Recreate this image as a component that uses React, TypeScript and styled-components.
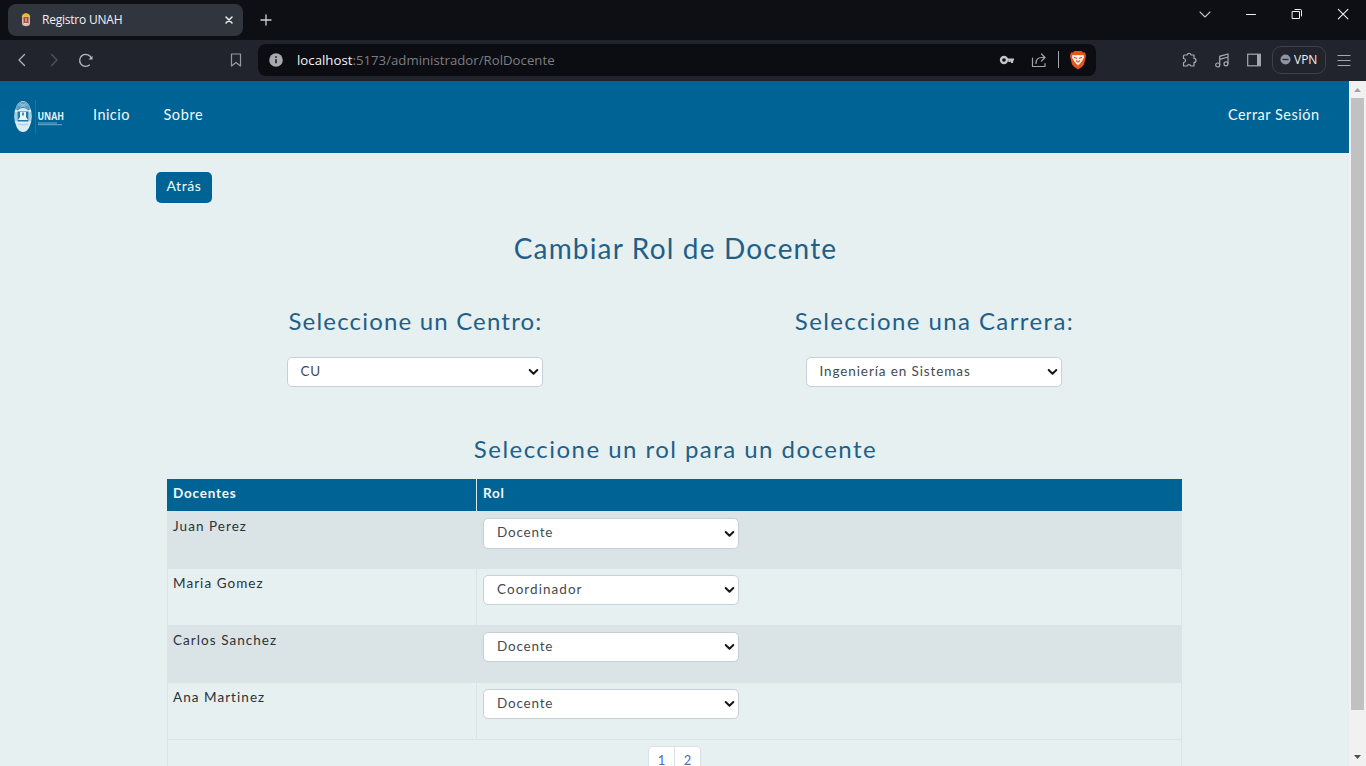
import React from "react";
import styled, { createGlobalStyle } from "styled-components";

const rounded = `Lato, "Open Sans", sans-serif`;
const system = `"Open Sans", "Noto Sans", sans-serif`;

const GlobalStyle = createGlobalStyle`
  *, *::before, *::after { box-sizing: border-box; }
  html, body { margin: 0; height: 100%; overflow: hidden; background: #e6f0f1; }
`;

const Window = styled.div`
  display: flex;
  flex-direction: column;
  width: 1366px;
  height: 766px;
  overflow: hidden;
  font-family: ${rounded};
`;

const TabBar = styled.div`
  display: flex;
  align-items: center;
  flex: none;
  height: 40px;
  padding: 0 0 0 8px;
  background: #0e0f14;
`;

const Tab = styled.div`
  display: flex;
  align-items: center;
  width: 235px;
  height: 32px;
  padding: 0 9px 0 11px;
  border-radius: 8px;
  background: #31353e;
  color: #f1f2f4;
  font: 12px ${system};
`;

const TabTitle = styled.span`
  flex: 1;
  margin-left: 9px;
  padding-bottom: 1px;
  letter-spacing: -0.22px;
`;

const NewTab = styled.div`
  display: flex;
  margin-left: 16px;
`;

const WindowButtons = styled.div`
  display: flex;
  gap: 30px;
  margin: -12px 15px 0 auto;
`;

const Toolbar = styled.div`
  display: flex;
  align-items: center;
  flex: none;
  height: 41px;
  padding: 0 14px 2px;
  background: #21242c;
`;

const NavButtons = styled.div`
  display: flex;
  align-items: center;
  gap: 16px;
  width: 214px;
`;

const AddressBar = styled.div`
  display: flex;
  align-items: center;
  width: 838px;
  height: 32px;
  margin-left: 14px;
  padding: 0 9px 0 10px;
  border-radius: 8px;
  background: #0c0d12;
  font: 13.2px ${system};
`;

const Url = styled.div`
  flex: 1;
  margin-left: 13px;
  color: #7c7e83;
  letter-spacing: 0.02px;
  b { color: #f3f3f4; font-weight: 400; }
`;

const AddressActions = styled.div`
  display: flex;
  align-items: center;
  gap: 10px;
`;

const ShareButton = styled.div`
  display: flex;
  margin-left: 6px;
`;

const Separator = styled.i`
  width: 1px;
  height: 17px;
  margin: 0 0 0 1px;
  background: #a5a7ac;
`;

const Extensions = styled.div`
  display: flex;
  align-items: center;
  gap: 10px;
  margin-left: auto;
`;

const ExtensionIcons = styled.div`
  display: flex;
  align-items: center;
  gap: 16px;
`;

const Vpn = styled.div`
  display: flex;
  align-items: center;
  gap: 3px;
  width: 54px;
  height: 28px;
  padding-left: 7px;
  border: 1px solid #3c4049;
  border-radius: 9px;
  color: #eff0f3;
  font: 500 12px ${system};
`;

const Viewport = styled.div`
  display: flex;
  flex: 1;
  min-height: 0;
`;

const Page = styled.div`
  flex: 1;
  overflow: hidden;
  background: #e6f0f1;
`;

const Navbar = styled.nav`
  display: flex;
  align-items: center;
  height: 72px;
  padding: 0 30px 0 12px;
  background: #006395;
`;

const NavLink = styled.a<{ $left?: number; $end?: boolean; $spacing: number }>`
  margin-left: ${(p) => (p.$end ? "auto" : `${p.$left ?? 0}px`)};
  margin-top: -5px;
  margin-right: ${(p) => -p.$spacing}px;
  color: #f1fafc;
  font-size: 14.5px;
  line-height: 20px;
  letter-spacing: ${(p) => p.$spacing}px;
`;

const Main = styled.main`
  padding: 19px 167px 0;
`;

const BackButton = styled.button`
  display: block;
  width: 56px;
  height: 31px;
  margin-left: -11px;
  padding: 0 0 4px;
  border: 0;
  border-radius: 5px;
  background: #006395;
  color: #f1fafc;
  font: 14px ${rounded};
  letter-spacing: 0.6px;
`;

const Heading = styled.h2<{ $size: number; $spacing: number }>`
  margin: 0;
  padding-left: 2px;
  color: #1f5f88;
  font-weight: 400;
  font-size: ${(p) => p.$size}px;
  line-height: 30px;
  letter-spacing: ${(p) => p.$spacing}px;
  text-align: center;
  white-space: nowrap;
`;

const TitleBlock = styled.header`
  height: 33px;
  margin-top: 30px;
`;

const Filters = styled.section`
  display: grid;
  grid-template-columns: 518px 520px;
  justify-content: center;
  margin: 40px 0 47px;
`;

const Filter = styled.div`
  display: flex;
  flex-direction: column;
  align-items: center;
  gap: 21px;
`;

const SelectBox = styled.label<{ $height: number }>`
  display: grid;
  align-items: center;
  width: 256px;
  height: ${(p) => p.$height}px;
  border: 1px solid #c6d0d8;
  border-radius: 5px;
  background: #fff;
  > * { grid-area: 1 / 1; }
  > svg { justify-self: end; margin-right: 3px; pointer-events: none; }
`;

const NativeSelect = styled.select<{ $spacing: number }>`
  appearance: none;
  width: 100%;
  height: 100%;
  padding: 0 24px 3px 13px;
  border: 0;
  background: transparent;
  color: #454a50;
  font: 13.5px ${rounded};
  letter-spacing: ${(p) => p.$spacing}px;
`;

const Table = styled.table`
  width: 1015px;
  margin-top: 15px;
  border-collapse: separate;
  border-spacing: 0;
  table-layout: fixed;
  color: #2b3237;
  font-size: 13.5px;
`;

const HeadCell = styled.th<{ $width?: number }>`
  width: ${(p) => (p.$width ? `${p.$width}px` : "auto")};
  height: 32px;
  padding: 0 6px 4px;
  border-right: ${(p) => (p.$width ? "1px solid #d9e8ee" : "0")};
  background: #006395;
  color: #f3fafc;
  text-align: left;
  line-height: 18px;
  letter-spacing: 0.8px;
`;

const Row = styled.tr<{ $striped: boolean }>`
  background: ${(p) => (p.$striped ? "#dae3e5" : "#e6f0f1")};
`;

const Cell = styled.td`
  height: 57px;
  padding: 6px 6px 0;
  border: 0 solid #dae3e5;
  border-width: 0 1px 1px 0;
  vertical-align: top;
  &:first-child { border-left-width: 1px; padding-left: 5px; }
  tr:first-child > & { height: 58px; padding-top: 7px; }
`;

const Teacher = styled.span`
  display: block;
  line-height: 17px;
  letter-spacing: 1.05px;
`;

const PagerCell = styled(Cell)`
  height: 50px;
`;

const Pager = styled.div`
  display: flex;
  width: 53px;
  height: 31px;
  margin-left: 475px;
  border: 1px solid #d9e1e6;
  border-radius: 4px;
  background: #fff;
`;

const PageLink = styled.a`
  flex: 1;
  color: #4a6fc0;
  font-size: 13px;
  line-height: 26px;
  text-align: center;
  & + & { border-left: 1px solid #d9e1e6; }
`;

const ScrollTrack = styled.div`
  display: flex;
  flex-direction: column;
  align-items: center;
  justify-content: space-between;
  width: 17px;
  padding: 7px 0;
  background: #f1f1f1;
`;

const ScrollThumb = styled.div`
  width: 13px;
  height: 612px;
  margin: 6px 1px auto 0;
  background: #c1c1c1;
`;

type StrokeProps = { w: number; h: number; d: string; color?: string; width?: number };

const Stroke = ({ w, h, d, color = "#a4a8b2", width = 1.2 }: StrokeProps) => (
  <svg width={w} height={h} viewBox={`0 0 ${w} ${h}`} fill="none" stroke={color} strokeWidth={width} strokeLinecap="round" strokeLinejoin="round">
    <path d={d} />
  </svg>
);

const Favicon = () => (
  <svg width="14" height="16" viewBox="0 0 14 16">
    <path d="M3 6 Q2 2 7 1 Q12 2 11 6Z" fill="#e9bd32" />
    <rect x="3" y="4.5" width="8" height="9.5" rx="3" fill="#cfc4bc" />
    <path d="M4.500 5h5v6.500h-5z" fill="#b34436" />
    <path d="M7 6v4M5 11.500h4" stroke="#efd4ba" strokeWidth="1" />
    <path d="M5.500 14h3l-1.500 1z" fill="#a43e36" />
  </svg>
);

const Crest = () => (
  <svg width="56" height="36" viewBox="0 0 56 36">
    <ellipse cx="11" cy="17.500" rx="8.700" ry="15.500" fill="#d9edf6" />
    <path d="M3.500 11Q5 2.500 11 2.500T18.500 11Q11 6 3.500 11Z" fill="#5f9fc2" />
    <path d="M6 6h10M8 4l6 5M14 4L8 9" stroke="#a9cfe2" strokeWidth=".7" />
    <path d="M5 11Q11 6 17 11" fill="none" stroke="#3c86b1" strokeWidth="1.200" />
    <path d="M5.500 12.500h11v10h-11z" fill="#2476a5" />
    <path d="M8 13h6v5l2 3H6l2-3z" fill="#e9f7fc" />
    <path d="M10 13.500h2v3h-2z" fill="#4b91b8" />
    <path d="M4 13v9M18 13v9" stroke="#75adc9" strokeWidth="1" />
    <path d="M6 25Q11 27 16 25" fill="none" stroke="#a6cee2" />
    <path d="M23.500 1v34" stroke="#1c73a1" strokeWidth="1" />
    <text x="25.500" y="21" fill="#e1f2fa" fontFamily="Open Sans" fontWeight="700" fontSize="10" textLength="26.500" lengthAdjust="spacingAndGlyphs">UNAH</text>
    <path d="M26 24h19" stroke="#72abc9" strokeWidth="1" />
    <path d="M26 25.700h24" stroke="#72abc9" strokeWidth="1" />
  </svg>
);

const Brave = () => (
  <svg width="18" height="20" viewBox="0 0 18 20">
    <path d="M5.500 1h7l1.500 1.500h2L17 6l-2 8.500Q13 17.500 9 19.500 5 17.500 3 14.500L1 6l1-3.500h2z" fill="#e4541f" />
    <path d="M3.500 5l3 .3L9 5l2.500.3 3-.3.500 2.500-2 3.500-1.500 2L9 15.500 6.500 13 5 11 3 7.500z" fill="#fff1e9" />
    <path d="M5 7.200l3 1.300M13 7.200l-3 1.300M7 10.500l2 1.500 2-1.500" fill="none" stroke="#e4541f" strokeWidth="1.200" />
  </svg>
);

const KeyIcon = () => (
  <svg width="16" height="12" viewBox="0 0 16 12" fill="none" stroke="#c3c5ca">
    <circle cx="5" cy="6" r="3" strokeWidth="2.400" />
    <path d="M8 5.500h7M13 6v3M10.500 6v2" strokeWidth="2.200" />
  </svg>
);

const MusicIcon = () => (
  <svg width="16" height="16" viewBox="0 0 16 16" fill="none" stroke="#a4a8b2" strokeWidth="1.200">
    <circle cx="3.700" cy="13" r="2" />
    <circle cx="12" cy="11.800" r="2" />
    <path d="M5.700 13V4.300L14 2v9.800M5.700 7.300L14 5" />
  </svg>
);

const SidebarIcon = () => (
  <svg width="16" height="16" viewBox="0 0 16 16">
    <rect x="1.700" y="2.200" width="12.600" height="11.600" fill="none" stroke="#a4a8b2" strokeWidth="1.200" />
    <path d="M11 2.500h3.500v11H11z" fill="#a4a8b2" />
  </svg>
);

const InfoIcon = () => (
  <svg width="16" height="16" viewBox="0 0 16 16">
    <circle cx="8" cy="8" r="6.800" fill="#a7a9ae" />
    <path d="M8 7.300v4M8 4.300v1.500" stroke="#191b20" strokeWidth="1.600" />
  </svg>
);

const Reload = () => (
  <svg width="16" height="16" viewBox="0 0 16 16" fill="none" stroke="#b4b7bf" strokeWidth="1.300">
    <path d="M13.400 6.500A6 6 0 1 0 11.800 12.700" />
    <path d="M10.500 7.500h4V3.800z" fill="#b4b7bf" stroke="none" />
  </svg>
);

const ScrollArrow = ({ down }: { down?: boolean }) => (
  <svg width="7" height="4" viewBox="0 0 7 4">
    <path d={down ? "M0 0h7L3.500 4z" : "M0 4h7L3.500 0z"} fill={down ? "#505050" : "#a3a3a3"} />
  </svg>
);

const Select = ({ value, spacing = 0.8, height = 30 }: { value: string; spacing?: number; height?: number }) => (
  <SelectBox $height={height}>
    <NativeSelect $spacing={spacing} defaultValue={value}>
      <option>{value}</option>
    </NativeSelect>
    <Stroke w={11} h={8} d="M1.700 2l3.800 3.800L9.300 2" color="#16181b" width={2} />
  </SelectBox>
);

const teachers = [
  { name: "Juan Perez", role: "Docente", spacing: 0.8 },
  { name: "Maria Gomez", role: "Coordinador", spacing: 1.05 },
  { name: "Carlos Sanchez", role: "Docente", spacing: 0.8 },
  { name: "Ana Martinez", role: "Docente", spacing: 0.8 },
];

export default function App() {
  return (
    <Window>
      <GlobalStyle />
      <TabBar>
        <Tab>
          <Favicon />
          <TabTitle>Registro UNAH</TabTitle>
          <Stroke w={10} h={10} d="M2 2l6 6M8 2L2 8" color="#eceef0" width={1.5} />
        </Tab>
        <NewTab><Stroke w={14} h={14} d="M7 2v10M2 7h10" color="#cfd0d4" width={1.3} /></NewTab>
        <WindowButtons>
          <Stroke w={16} h={16} d="M3 6l5 5 5-5" color="#c1c2c6" width={1.1} />
          <Stroke w={16} h={16} d="M3.500 8.500h9" color="#f0f0f0" width={1} />
          <Stroke w={16} h={16} d="M3.500 5.500h7v7h-7zM6 3.500h5.500q1 0 1 1V10" color="#f0f0f0" width={1} />
          <Stroke w={16} h={16} d="M3.300 3.300l9.600 9.600M12.900 3.300L3.300 12.900" color="#f0f0f0" width={1.1} />
        </WindowButtons>
      </TabBar>
      <Toolbar>
        <NavButtons>
          <Stroke w={16} h={16} d="M10.500 2.500L5 8l5.500 5.500" color="#b4b7bf" />
          <Stroke w={16} h={16} d="M5.500 2.500L11 8l-5.500 5.500" color="#535760" />
          <Reload />
        </NavButtons>
        <Stroke w={16} h={16} d="M3.500 2h9v12L8 10.500 3.500 14z" color="#969aa4" />
        <AddressBar>
          <InfoIcon />
          <Url><b>localhost</b>:5173/administrador/RolDocente</Url>
          <AddressActions>
            <KeyIcon />
            <ShareButton>
              <Stroke w={16} h={16} d="M1.500 6v8.500h12.500V11.500M5 11.500Q5 5.500 11 5.500h3M10.500 2L14 5.500 10.500 9" color="#a4a6ab" />
            </ShareButton>
            <Separator />
            <Brave />
          </AddressActions>
        </AddressBar>
        <Extensions>
          <ExtensionIcons>
            <Stroke
              w={16}
              h={16}
              d="M2.500 3H5a2.200 2.200 0 0 1 4.200 0H12v3.400a2 2 0 0 1 0 4V14H9a2.200 2.200 0 0 0-4 0H1.500v-3.500a2 2 0 0 0 0-4V4q0-1 1-1z"
            />
            <MusicIcon />
            <SidebarIcon />
          </ExtensionIcons>
          <Vpn>
            <svg width="11" height="11" viewBox="0 0 11 11">
              <circle cx="5.500" cy="5.500" r="5" fill="#8f94a5" />
              <path d="M2.500 5.500h6" stroke="#282b34" strokeWidth="1.300" />
            </svg>
            VPN
          </Vpn>
          <Stroke w={16} h={16} d="M2 3.500h12M2 8.500h12M2 13.500h12" />
        </Extensions>
      </Toolbar>
      <Viewport>
        <Page>
          <Navbar>
            <Crest />
            <NavLink $left={25} $spacing={0.45}>Inicio</NavLink>
            <NavLink $left={34} $spacing={0.6}>Sobre</NavLink>
            <NavLink $end $spacing={0.5}>Cerrar Sesión</NavLink>
          </Navbar>
          <Main>
            <BackButton>Atrás</BackButton>
            <TitleBlock>
              <Heading $size={28} $spacing={1.18}>Cambiar Rol de Docente</Heading>
            </TitleBlock>
            <Filters>
              <Filter>
                <Heading as="h3" $size={24} $spacing={1.18}>Seleccione un Centro:</Heading>
                <Select value="CU" />
              </Filter>
              <Filter>
                <Heading as="h3" $size={24} $spacing={1.4}>Seleccione una Carrera:</Heading>
                <Select value="Ingeniería en Sistemas" spacing={0.89} />
              </Filter>
            </Filters>
            <Heading as="h3" $size={24} $spacing={1.46}>Seleccione un rol para un docente</Heading>
            <Table>
              <thead>
                <tr>
                  <HeadCell $width={310}>Docentes</HeadCell>
                  <HeadCell>Rol</HeadCell>
                </tr>
              </thead>
              <tbody>
                {teachers.map((t, i) => (
                  <Row key={t.name} $striped={i % 2 === 0}>
                    <Cell><Teacher>{t.name}</Teacher></Cell>
                    <Cell><Select value={t.role} spacing={t.spacing} height={i === 0 ? 31 : 30} /></Cell>
                  </Row>
                ))}
                <tr>
                  <PagerCell colSpan={2}>
                    <Pager><PageLink>1</PageLink><PageLink>2</PageLink></Pager>
                  </PagerCell>
                </tr>
              </tbody>
            </Table>
          </Main>
        </Page>
        <ScrollTrack>
          <ScrollArrow />
          <ScrollThumb />
          <ScrollArrow down />
        </ScrollTrack>
      </Viewport>
    </Window>
  );
}
